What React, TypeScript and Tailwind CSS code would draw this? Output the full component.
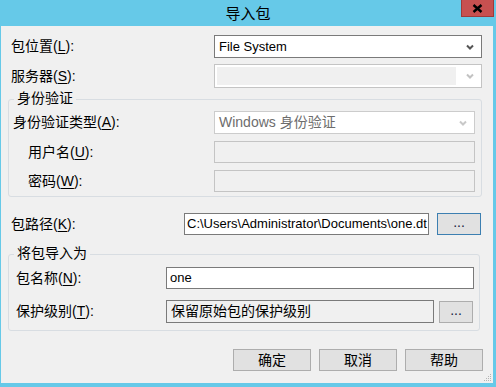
import React from 'react';

const font = { fontFamily: '"Liberation Sans", "Noto Sans CJK SC", sans-serif' };

function Chevron({ color }: { color: string }) {
  return (
    <svg width="8" height="6" viewBox="0 0 8 6" className="shrink-0">
      <path d="M1 1.5 L4 4.5 L7 1.5" fill="none" stroke={color} strokeWidth="2" />
    </svg>
  );
}

function Mn({ label, k }: { label: string; k: string }) {
  return (
    <span className="whitespace-nowrap">
      {label}(<span className="underline underline-offset-2">{k}</span>):
    </span>
  );
}

function Btn({ children, className = '' }: { children: React.ReactNode; className?: string }) {
  return (
    <div className={`flex items-center justify-center bg-[#e1e1e1] border border-[#adadad] text-[14px] text-black ${className}`}>
      {children}
    </div>
  );
}

function Group({ title, className, children }: { title: string; className: string; children: React.ReactNode }) {
  return (
    <div className={`relative ml-[7px] border border-[#d8dde2] rounded-[3px] ${className}`}>
      <span className="absolute -top-[12px] left-[5px] bg-[#f0f0f0] px-[3px] text-[14px] leading-[20px] text-black">
        {title}
      </span>
      {children}
    </div>
  );
}

export default function App() {
  return (
    <div className="w-[496px] h-[387px] bg-[#66c9e8] flex flex-col overflow-hidden" style={font}>
      {/* title bar */}
      <div className="relative h-[26px] shrink-0 flex items-center justify-center">
        <span className="text-[15px] text-black leading-none">导入包</span>
        <div className="absolute top-0 right-[2px] w-[33px] h-[17px] bg-[#c75050] border border-t-0 border-[#9e3a3a] flex items-center justify-center">
          <svg width="11" height="9" viewBox="0 0 11 9">
            <path d="M1.5 1 L9.5 8 M9.5 1 L1.5 8" stroke="#000" strokeWidth="2.4" />
          </svg>
        </div>
      </div>

      {/* client area */}
      <div className="relative ml-[1px] mr-[3px] mb-[4px] flex-1 bg-[#f0f0f0] flex flex-col text-[14px] text-black">
        <div className="mt-[9px] ml-[10px] flex items-center h-[23px]">
          <div className="w-[203px]"><Mn label="包位置" k="L" /></div>
          <div className="w-[268px] h-[23px] bg-white border border-[#7a7a7a] flex items-center pl-[4px] pr-[7px]">
            <span className="flex-1 text-[13px]">File System</span>
            <Chevron color="#555" />
          </div>
        </div>

        <div className="mt-[6px] ml-[10px] flex items-center h-[24px]">
          <div className="w-[203px]"><Mn label="服务器" k="S" /></div>
          <div className="w-[268px] h-[24px] bg-white border border-[#c4c4c4] flex items-center p-[2px] pr-[7px]">
            <div className="flex-1 h-full bg-[#f0f0f0] mr-[10px]" />
            <Chevron color="#c2c2c2" />
          </div>
        </div>

        <Group title="身份验证" className="mt-[11px] w-[474px] h-[98px] pt-[11px] pl-[4px]">
          <div className="flex items-center h-[23px]">
            <div className="w-[201px]"><Mn label="身份验证类型" k="A" /></div>
            <div className="w-[261px] h-[23px] bg-white border border-[#cccccc] flex items-center pl-[4px] pr-[7px] text-[#6d6d6d]">
              <span className="flex-1 text-[14px]">Windows 身份验证</span>
              <Chevron color="#c8c8c8" />
            </div>
          </div>
          <div className="mt-[7px] flex items-center h-[22px]">
            <div className="w-[201px] pl-[15px]"><Mn label="用户名" k="U" /></div>
            <div className="w-[261px] h-[22px] bg-[#f0f0f0] border border-[#c4c4c4]" />
          </div>
          <div className="mt-[7px] flex items-center h-[22px]">
            <div className="w-[201px] pl-[15px]"><Mn label="密码" k="W" /></div>
            <div className="w-[261px] h-[22px] bg-[#f0f0f0] border border-[#c4c4c4]" />
          </div>
        </Group>

        <div className="mt-[16px] ml-[10px] flex items-center h-[22px]">
          <div className="w-[173px]"><Mn label="包路径" k="K" /></div>
          <div className="w-[245px] h-[22px] bg-white border border-[#7a7a7a] flex items-center pl-[2px] overflow-hidden">
            <span className="text-[13px] whitespace-nowrap">C:\Users\Administrator\Documents\one.dt</span>
          </div>
          <Btn className="ml-[8px] w-[44px] h-[22px] !border-[#3c7fb1]">
            <span className="text-[14px] leading-none pb-[4px] text-[#1a1a40]">...</span>
          </Btn>
        </div>

        <Group title="将包导入为" className="mt-[19px] w-[472px] h-[77px] pt-[12px] pl-[7px]">
          <div className="flex items-center h-[22px]">
            <div className="w-[150px]"><Mn label="包名称" k="N" /></div>
            <div className="w-[308px] h-[22px] bg-white border border-[#7a7a7a] flex items-center pl-[3px]">
              <span className="text-[13px]">one</span>
            </div>
          </div>
          <div className="mt-[11px] flex items-center h-[23px]">
            <div className="w-[150px]"><Mn label="保护级别" k="T" /></div>
            <div className="w-[268px] h-[23px] bg-[#f0f0f0] border border-[#7a7a7a] flex items-center pl-[4px]">
              <span className="text-[14px]">保留原始包的保护级别</span>
            </div>
            <Btn className="ml-[5px] w-[34px] h-[22px]">
              <span className="text-[14px] leading-none pb-[4px] text-[#1a1a40]">...</span>
            </Btn>
          </div>
        </Group>

        <div className="mt-[18px] mr-[10px] flex justify-end gap-[8px]">
          <Btn className="w-[78px] h-[22px]">确定</Btn>
          <Btn className="w-[78px] h-[22px]">取消</Btn>
          <Btn className="w-[78px] h-[22px]">帮助</Btn>
        </div>

        {/* size grip */}
        <svg className="absolute right-[1px] bottom-[1px]" width="8" height="8" viewBox="0 0 8 8">
          {[[6, 0], [4, 2], [6, 2], [2, 4], [4, 4], [6, 4], [0, 6], [2, 6], [4, 6], [6, 6]].map(([x, y], i) => (
            <rect key={i} x={x} y={y} width="1" height="1" fill="#b4b4b4" />
          ))}
        </svg>
      </div>
    </div>
  );
}
